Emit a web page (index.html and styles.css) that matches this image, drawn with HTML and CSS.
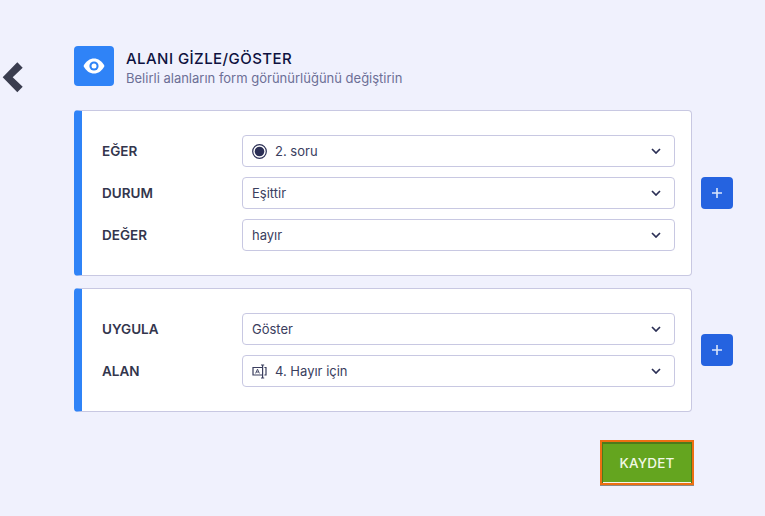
FILE: index.html
```html
<!DOCTYPE html>
<html lang="tr">
<head>
    <meta charset="UTF-8">
    <title>Alanı Gizle/Göster</title>
    <link rel="stylesheet" href="styles.css">
</head>
<body>
<div class="page">
    <div class="back">
        <svg width="22" height="34" viewBox="0 0 22 34"><path d="M0.7 17.3 L15.3 2.3 L20.7 7.7 L10.7 17.3 L20.7 26.7 L15.3 32.3 Z" fill="#3a3d4f"/></svg>
    </div>
    <div class="main">
        <div class="header">
            <div class="header-icon">
                <svg width="22" height="16" viewBox="0 0 22 16">
                    <path d="M0.5 8 C3 3 7 0.5 11 0.5 C15 0.5 19 3 21.5 8 C19 13 15 15.5 11 15.5 C7 15.5 3 13 0.5 8 Z" fill="#fff"/>
                    <circle cx="11" cy="8" r="4.6" fill="#2f83f7"/>
                    <circle cx="11" cy="8" r="2.5" fill="#fff"/>
                </svg>
            </div>
            <div class="header-text">
                <h1>ALANI GİZLE/GÖSTER</h1>
                <p class="subtitle">Belirli alanların form görünürlüğünü değiştirin</p>
            </div>
        </div>

        <div class="block">
            <div class="card">
                <div class="field">
                    <label>EĞER</label>
                    <div class="select">
                        <svg class="opt-icon" width="15" height="15" viewBox="0 0 15 15"><circle cx="7.5" cy="7.5" r="6.8" fill="none" stroke="#2b2f55" stroke-width="1.2"/><circle cx="7.5" cy="7.5" r="4.8" fill="#2b2f55"/></svg>
                        <span>2. soru</span>
                        <svg class="caret" width="10" height="6" viewBox="0 0 10 6"><path d="M1 1 L5 5 L9 1" fill="none" stroke="#2b2f55" stroke-width="1.7"/></svg>
                    </div>
                </div>
                <div class="field">
                    <label>DURUM</label>
                    <div class="select">
                        <span>Eşittir</span>
                        <svg class="caret" width="10" height="6" viewBox="0 0 10 6"><path d="M1 1 L5 5 L9 1" fill="none" stroke="#2b2f55" stroke-width="1.7"/></svg>
                    </div>
                </div>
                <div class="field">
                    <label>DEĞER</label>
                    <div class="select">
                        <span>hayır</span>
                        <svg class="caret" width="10" height="6" viewBox="0 0 10 6"><path d="M1 1 L5 5 L9 1" fill="none" stroke="#2b2f55" stroke-width="1.7"/></svg>
                    </div>
                </div>
            </div>
            <button class="add">
                <svg width="12" height="12" viewBox="0 0 12 12"><path d="M6 1 V11 M1 6 H11" stroke="#dbe6fb" stroke-width="1.6"/></svg>
            </button>
        </div>

        <div class="block">
            <div class="card">
                <div class="field">
                    <label>UYGULA</label>
                    <div class="select">
                        <span>Göster</span>
                        <svg class="caret" width="10" height="6" viewBox="0 0 10 6"><path d="M1 1 L5 5 L9 1" fill="none" stroke="#2b2f55" stroke-width="1.7"/></svg>
                    </div>
                </div>
                <div class="field">
                    <label>ALAN</label>
                    <div class="select">
                        <svg class="opt-icon" width="15" height="15" viewBox="0 0 15 15">
                            <path d="M10 3.5 H1 V11 H10" fill="none" stroke="#3a3e5e" stroke-width="1.2"/>
                            <path d="M3.6 9.4 L5.5 5.2 L7.4 9.4 M4.3 8 H6.7" fill="none" stroke="#3a3e5e" stroke-width="0.9"/>
                            <path d="M10.6 1 V14 M9 1 H12.2 M9 14 H12.2" fill="none" stroke="#3a3e5e" stroke-width="1.2"/>
                            <path d="M12.4 3.5 H14 V11 H12.4" fill="none" stroke="#3a3e5e" stroke-width="1.2"/>
                        </svg>
                        <span>4. Hayır için</span>
                        <svg class="caret" width="10" height="6" viewBox="0 0 10 6"><path d="M1 1 L5 5 L9 1" fill="none" stroke="#2b2f55" stroke-width="1.7"/></svg>
                    </div>
                </div>
            </div>
            <button class="add">
                <svg width="12" height="12" viewBox="0 0 12 12"><path d="M6 1 V11 M1 6 H11" stroke="#dbe6fb" stroke-width="1.6"/></svg>
            </button>
        </div>

        <div class="footer">
            <button class="save">KAYDET</button>
        </div>
    </div>
</div>
</body>
</html>
```

FILE: styles.css
```css
* {
    box-sizing: border-box;
    margin: 0;
    padding: 0;
}

body {
    font-family: 'Inter', 'Open Sans', sans-serif;
    background-color: #f0f1fd;
    color: #2b2f55;
    height: 516px;
    overflow: hidden;
}

.page {
    display: flex;
    padding-top: 46px;
}

.back {
    width: 74px;
    flex-shrink: 0;
    padding: 14px 0 0 2px;
}

.back svg {
    display: block;
}

.main {
    width: 659px;
}

.header {
    display: flex;
    gap: 12px;
    margin-bottom: 24px;
    height: 40px;
}

.header-icon {
    width: 40px;
    height: 40px;
    border-radius: 4px;
    background-color: #2f83f7;
    display: flex;
    justify-content: center;
    align-items: center;
}

.header-text {
    padding-top: 3px;
}

h1 {
    font-size: 15px;
    font-weight: 500;
    letter-spacing: 0.45px;
    line-height: 20px;
    color: #0e1140;
}

.subtitle {
    font-size: 13px;
    line-height: 18px;
    color: #6c6f96;
}

.block {
    display: flex;
    align-items: center;
    gap: 9px;
    margin-bottom: 12px;
}

.card {
    width: 618px;
    padding: 24px 16px 24px 20px;
    display: flex;
    flex-direction: column;
    gap: 10px;
    background-color: #fff;
    border: 1px solid #c8c8e2;
    border-left: 8px solid #2f83f7;
    border-radius: 4px;
}

.field {
    display: flex;
    align-items: center;
}

label {
    width: 140px;
    flex-shrink: 0;
    font-size: 13.5px;
    font-weight: 600;
    color: #33364d;
}

.select {
    flex: 1;
    height: 32px;
    padding: 0 13px 0 9px;
    display: flex;
    align-items: center;
    font-size: 13px;
    color: #3a3e5e;
    border: 1px solid #c8c8e2;
    border-radius: 4px;
    background-color: #fff;
}

.opt-icon {
    margin-right: 8px;
    flex-shrink: 0;
}

.caret {
    margin-left: auto;
}

.add {
    width: 32px;
    height: 32px;
    border: none;
    border-radius: 4px;
    background-color: #2563e0;
    display: flex;
    justify-content: center;
    align-items: center;
}

.footer {
    display: flex;
    padding: 16px 0 0 526px;
}

.save {
    width: 94px;
    height: 45px;
    font-family: inherit;
    font-size: 13.5px;
    font-weight: 500;
    letter-spacing: 0.2px;
    color: #f2f8e6;
    background-color: #64a51f;
    border: 2px solid #ed6f12;
    box-shadow: inset 0 1px 0 1px #4d7a1b, inset 0 -1px 0 #f3f6ea, 0 1px 0 #8f8a80;
}
```
